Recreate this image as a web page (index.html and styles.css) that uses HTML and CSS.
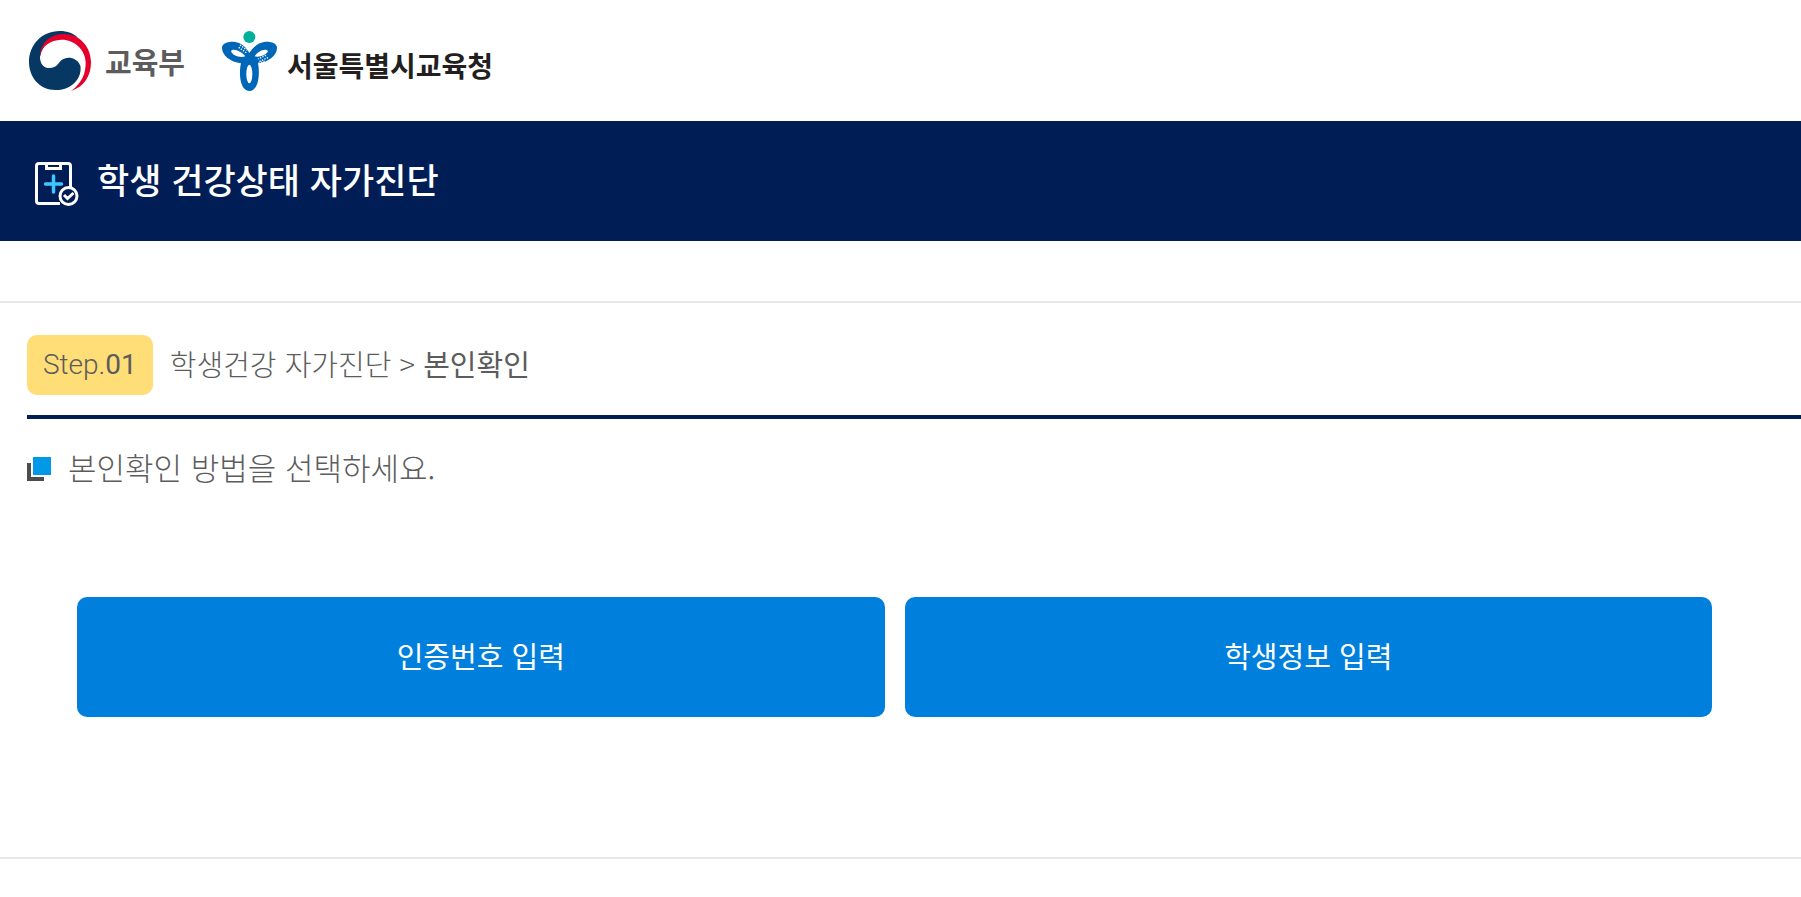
FILE: index.html
```html
<!DOCTYPE html>
<html lang="ko">
<head>
    <meta charset="UTF-8">
    <meta name="viewport" content="width=device-width, initial-scale=1.0">
    <title>학생 건강상태 자가진단</title>
    <link rel="stylesheet" href="styles.css">
</head>
<body>
    <header class="header">
        <a href="#" class="logo logo-moe">
            <svg width="62" height="60" viewBox="0 0 186 180" aria-hidden="true">
                <path fill="#073763" d="M33 77C33 100 45 111 62 111C84 111 88 96 97 88C113 75 143 78 154 104C160 135 135 177 80 177C30 177 0 137 0 93C0 42 38 0 92 0C115 0 135 8 147 20C100 5 45 20 33 77Z"/>
                <path fill="#e4002b" d="M33 77C33 40 60 10 102 9C155 9 186 50 186 94C186 135 165 168 126 180C160 155 171 125 170 92C168 55 135 25 97 26C65 27 36 45 33 77Z"/>
            </svg>
            <span>교육부</span>
        </a>
        <a href="#" class="logo logo-sen">
            <svg width="55" height="60" viewBox="0 0 165 180" aria-hidden="true">
                <circle cx="82" cy="18" r="18" fill="#00b09b"/>
                <path fill="#0066b8" d="M0 50C0 37 18 31 35 32C58 34 74 50 82 66C92 50 108 34 130 32C148 31 165 37 165 50C165 74 140 92 108 97C114 125 111 180 82 180C53 180 50 125 57 97C25 92 0 74 0 50Z"/>
                <g fill="#fff">
                    <path d="M27 60C34 50 60 62 70 76C54 82 30 73 27 60Z"/>
                    <path d="M138 60C131 50 107 60 98 76C112 80 134 72 138 60Z"/>
                    <ellipse cx="82" cy="129" rx="9" ry="28"/>
                </g>
                <g fill="none" stroke="#fff" stroke-width="4" stroke-dasharray="4 4">
                    <path d="M54 42L76 58M50 49L74 66"/>
                    <path d="M138 80L110 92M128 90L108 98M132 73L108 84"/>
                </g>
            </svg>
            <span>서울특별시교육청</span>
        </a>
    </header>

    <div class="title-bar">
        <svg width="44" height="44" viewBox="0 0 44 44" fill="none" stroke="#fff" stroke-width="3" aria-hidden="true">
            <path d="M25 41.500H4Q1.500 41.500 1.500 39V4Q1.500 1.500 4 1.500H33Q35.500 1.500 35.500 4V25"/>
            <path d="M11.500 2V6.500H25.500V2"/>
            <path stroke="#3fc8ff" stroke-width="3.500" stroke-linecap="round" d="M18.500 14V30M10.500 22H26.500"/>
            <circle cx="33.500" cy="34" r="8.500"/>
            <path d="M29 33L32.500 36.500L38.500 31"/>
        </svg>
        <h1>학생 건강상태 자가진단</h1>
    </div>

    <main class="content">
        <div class="step">
            <span class="badge">Step.<b>01</b></span>
            <p class="path">학생건강 자가진단 &gt; <b>본인확인</b></p>
        </div>

        <h2 class="guide">
            <svg width="24" height="24" viewBox="0 0 24 24" aria-hidden="true">
                <path fill="#4d4d4d" d="M0 6H4V20H17V24H0Z"/>
                <path fill="#0099e8" d="M6 0H24V18H6Z"/>
            </svg>
            <span>본인확인 방법을 선택하세요.</span>
        </h2>

        <div class="buttons">
            <button type="button">인증번호 입력</button>
            <button type="button">학생정보 입력</button>
        </div>
    </main>
</body>
</html>
```
FILE: styles.css
```css
* {
    box-sizing: border-box;
}
body {
    margin: 0;
    font-family: "Noto Sans CJK KR", sans-serif;
    color: #5c5c5c;
    background-color: #fff;
}
h1, h2, p {
    margin: 0;
    font-weight: 400;
}
.header {
    display: flex;
    align-items: center;
    gap: 37px;
    height: 121px;
    padding: 0 29px;
}
.logo {
    display: flex;
    align-items: center;
    font-weight: 700;
    text-decoration: none;
}
.logo-moe {
    gap: 14px;
    font-size: 29px;
    color: #5c5c5c;
}
.logo-sen {
    gap: 10px;
    font-size: 28px;
    color: #231f20;
}
.logo-sen span {
    padding-top: 8px;
}
.title-bar {
    display: flex;
    align-items: center;
    gap: 18px;
    height: 120px;
    padding: 6px 35px 0;
    color: #fff;
    background-color: #001e55;
}
.title-bar h1 {
    padding-bottom: 10px;
    font-size: 35px;
    font-weight: 500;
    line-height: 48px;
}
.content {
    margin-top: 60px;
    padding-left: 27px;
    border-top: 2px solid #e6e6e6;
    border-bottom: 2px solid #e6e6e6;
}
.step {
    display: flex;
    align-items: center;
    gap: 17px;
    padding: 32px 0 20px;
    border-bottom: 4px solid #001e55;
}
.badge {
    padding: 0 16px;
    font-family: Roboto, sans-serif;
    font-size: 28px;
    font-weight: 300;
    line-height: 60px;
    background-color: #ffdd77;
    border-radius: 10px;
}
.badge b {
    font-weight: 400;
}
.path {
    padding-bottom: 4px;
    font-size: 29px;
    font-weight: 300;
    line-height: 56px;
}
.path b {
    font-weight: 400;
}
.guide {
    display: flex;
    align-items: center;
    gap: 17px;
    margin-top: 26px;
    font-size: 31px;
    font-weight: 300;
    line-height: 44px;
}
.guide span {
    padding-bottom: 4px;
}
.buttons {
    display: flex;
    gap: 20px;
    padding: 104px 89px 140px 50px;
}
.buttons button {
    flex: 1;
    height: 120px;
    padding: 0 0 4px;
    font-family: inherit;
    font-size: 29px;
    color: #fff;
    background-color: #007fdd;
    border: none;
    border-radius: 10px;
    cursor: pointer;
}
```
